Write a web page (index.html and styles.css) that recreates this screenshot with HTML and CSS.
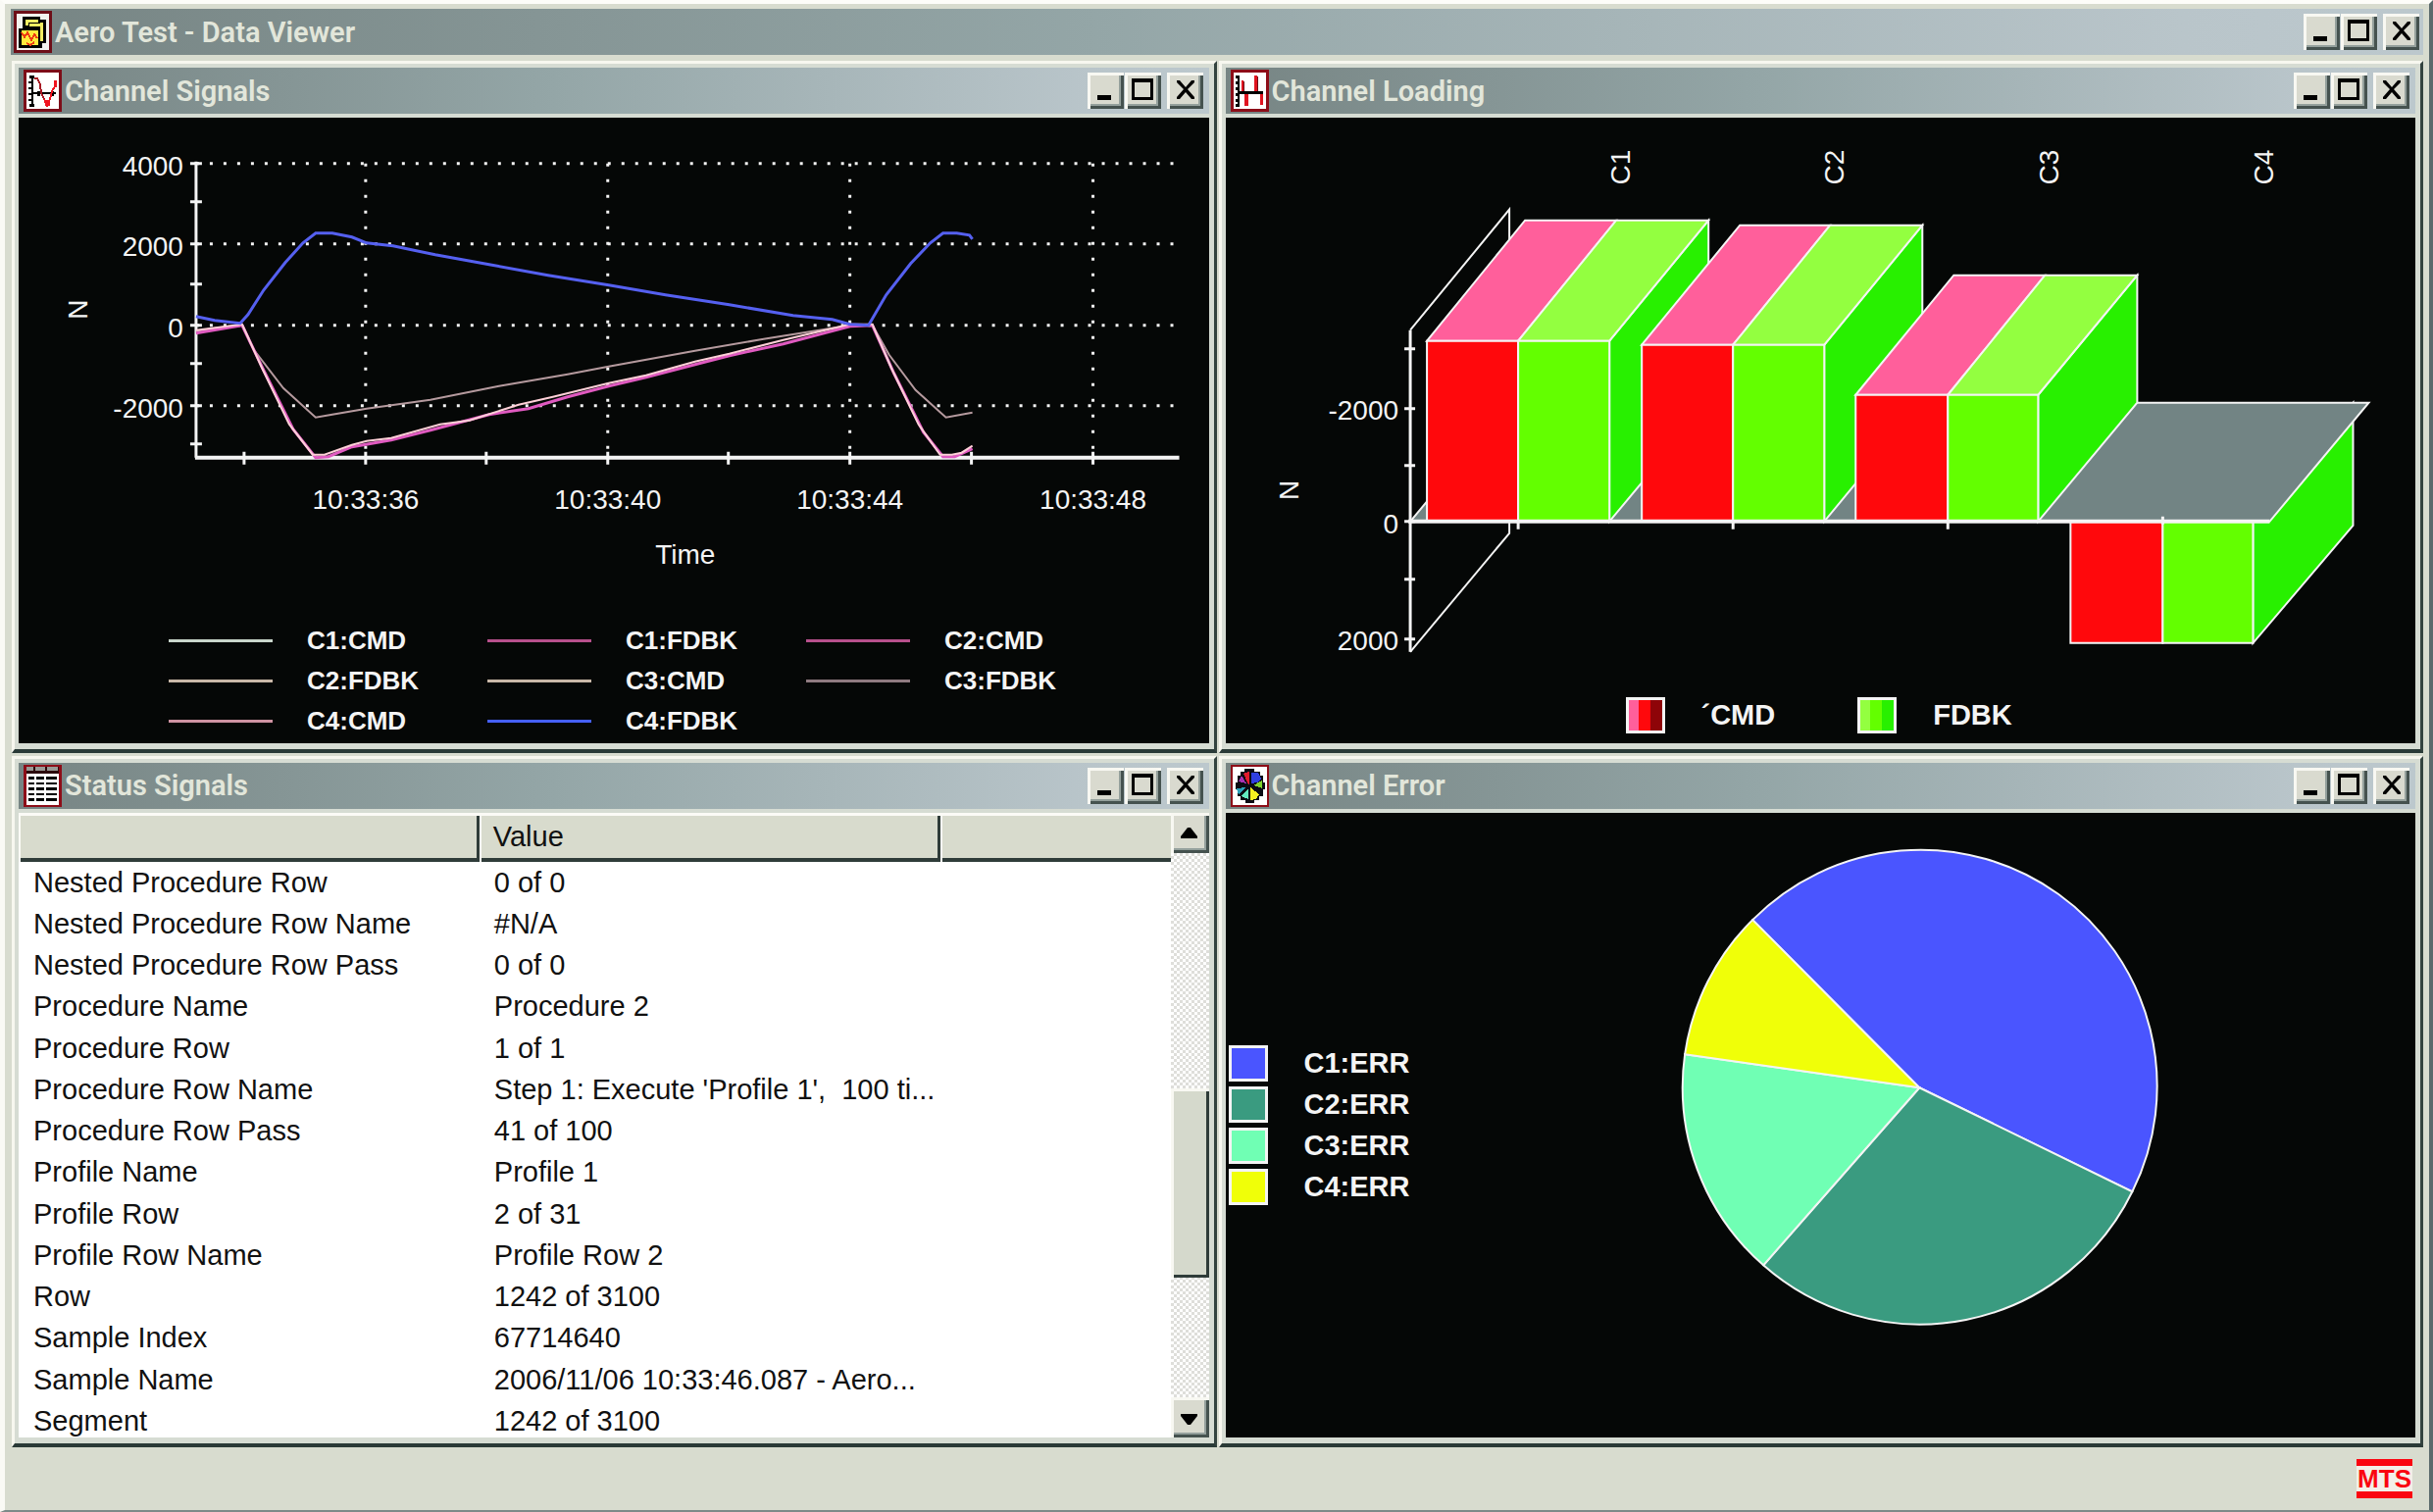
FILE: index.html
```html
<!DOCTYPE html>
<html lang="en">
<head>
    <meta charset="UTF-8">
    <meta name="viewport" content="width=device-width, initial-scale=1.0">
    <title>Aero Test - Data Viewer</title>
    <link rel="stylesheet" href="styles.css">
</head>
<body>
    <!-- shared window button glyphs -->
    <svg class="defs" aria-hidden="true">
        <symbol id="min" viewBox="0 0 37 37"><path d="M10 23h14v5h-14z"/></symbol>
        <symbol id="max" viewBox="0 0 37 37"><path fill-rule="evenodd" d="M7 6h22v22h-22zM10 10v15h16v-15z"/></symbol>
        <symbol id="close" viewBox="0 0 37 37"><path d="M10 8h3l6 7 6-7h3v2l-7 7 7 8v2h-3l-6-7-6 7h-3v-2l7-8-7-7z"/></symbol>
    </svg>

    <header class="titlebar main-title">
        <svg class="icon" viewBox="0 0 39 43" aria-hidden="true">
            <path fill="#6d0e17" d="M0 0h39v43h-39z"/>
            <path fill="#f3f3ee" d="M3 3h33v37h-33z"/>
            <path fill="#000" d="M9 6h18v3h6v24h-4v5h-24v-20h4z"/>
            <path fill="#f3ee62" d="M12 9h13v3h-13zM12 12h3v3h-3zM16 13h12v3h-12zM27 12h3v19h-3z"/>
            <path fill="#ffe93b" d="M8 20h17v15h-17z"/>
            <path fill="none" stroke="#ee3b12" stroke-width="2" d="M8 22l3 5 3-5 4 8 3-6 3 4M13 33l4 2 4-3"/>
        </svg>
        <h1>Aero Test - Data Viewer</h1>
        <div class="controls">
            <button aria-label="Minimize"><svg><use href="#min"/></svg></button>
            <button aria-label="Maximize"><svg><use href="#max"/></svg></button>
            <button class="close" aria-label="Close"><svg><use href="#close"/></svg></button>
        </div>
    </header>

    <main class="desktop">
        <!-- Channel Signals -->
        <section class="window">
            <div class="titlebar">
                <svg class="icon" viewBox="0 0 39 43" aria-hidden="true">
                    <path fill="#7d0d18" d="M0 0h39v43h-39z"/>
                    <path fill="#fff" d="M3 3h33v37h-33z"/>
                    <path fill="#000" d="M8 6h2v31h-2zM6 6h5v3h-5zM5 12h4v2h-4zM5 18h4v2h-4zM5 24h4v2h-4zM5 30h4v2h-4zM6 35h5v3h-5zM8 23h25v2h-25zM14 22h3v5h-3zM28 22h3v5h-3z"/>
                    <path fill="none" stroke="#a81a24" stroke-width="2" d="M11 9h3l3 6 1 9 4 8"/>
                    <path fill="none" stroke="#f01420" stroke-width="2" d="M21 30l3 7 3-7 2-8 3-5v-6"/>
                    <path fill="#f01420" d="M22 31h5v6h-5zM31 11h3v7h-3z"/>
                </svg>
                <h2>Channel Signals</h2>
                <div class="controls">
                    <button aria-label="Minimize"><svg><use href="#min"/></svg></button>
                    <button aria-label="Maximize"><svg><use href="#max"/></svg></button>
                    <button class="close" aria-label="Close"><svg><use href="#close"/></svg></button>
                </div>
            </div>
            <div class="content chart">
                <svg class="plot" viewBox="0 0 1214 511" role="img" aria-label="Channel signals in N over time">
                    <path class="dots-x" d="M181 46H1184M181 128H1184M181 211H1184M181 293H1184"/>
                    <path class="dots-y" d="M354 46V345M601 46V345M848 46V345M1096 46V345"/>
                    <path class="axis" d="M181 44V346M175 46h12M175 85h12M175 128h12M175 169h12M175 211h12M175 250h12M175 293h12M175 332h12"/>
                    <path class="axis" d="M230 340v13M354 340v13M477 340v13M601 340v13M724 340v13M848 340v13M972 340v13M1096 340v13"/>
                    <path class="baseline" d="M180 346H1184"/>
                    <path class="line c3" d="M181 217L200 214 228 210 240 236 270 275 303 305 320 302 355 296 420 287 490 273 560 261 602 253 690 237 760 225 848 211 871 211 888 241 915 277 946 305 973 300"/>
                    <path class="line magenta" d="M181 219L228 211 250 257 280 317 303 346 316 345 340 335 380 328 420 318 480 302 520 296 560 284 602 273 640 264 690 251 725 242 780 230 848 212 871 211 893 260 923 320 943 345 955 345 973 337"/>
                    <path class="line pink" d="M181 216L228 210 248 254 276 312 300 343 312 343 340 333 355 329 380 326 430 312 460 308 510 292 545 284 602 270 640 262 690 248 725 240 780 226 848 210 871 210 890 254 918 312 940 343 952 343 962 341 973 334"/>
                    <path class="line c4" d="M181 202L200 206 226 209 234 200 250 175 272 147 290 127 303 117H320L340 121 355 127 382 130 425 139 480 149 540 160 602 170 660 180 725 190 790 201 830 205 848 210 867 211 885 180 910 148 930 127 943 117H957L970 119 973 123"/>
                    <g class="label end">
                        <text x="168" y="58">4000</text>
                        <text x="168" y="140">2000</text>
                        <text x="168" y="223">0</text>
                        <text x="168" y="305">-2000</text>
                    </g>
                    <g class="label mid">
                        <text x="354" y="398">10:33:36</text>
                        <text x="601" y="398">10:33:40</text>
                        <text x="848" y="398">10:33:44</text>
                        <text x="1096" y="398">10:33:48</text>
                        <text x="680" y="454">Time</text>
                        <text transform="translate(70 195) rotate(-90)">N</text>
                    </g>
                </svg>
                <ul class="line-legend">
                    <li><i class="key k1"></i>C1:CMD</li>
                    <li><i class="key k2"></i>C1:FDBK</li>
                    <li><i class="key k2"></i>C2:CMD</li>
                    <li><i class="key k3"></i>C2:FDBK</li>
                    <li><i class="key k3"></i>C3:CMD</li>
                    <li><i class="key k4"></i>C3:FDBK</li>
                    <li><i class="key k5"></i>C4:CMD</li>
                    <li><i class="key k6"></i>C4:FDBK</li>
                </ul>
            </div>
        </section>

        <!-- Channel Loading -->
        <section class="window">
            <div class="titlebar">
                <svg class="icon" viewBox="0 0 39 43" aria-hidden="true">
                    <path fill="#8d0d18" d="M0 0h39v43h-39z"/>
                    <path fill="#fff" d="M3 3h33v37h-33z"/>
                    <path fill="#000" d="M7 6h2v31h-2zM5 6h4v3h-4zM5 12h4v3h-4zM5 18h4v3h-4zM5 24h4v3h-4zM5 30h4v3h-4zM5 35h4v3h-4zM9 22h24v3h-24z"/>
                    <path fill="#e01420" d="M11 11h2v11h-2zM14 25h4v12h-4zM24 6h3v16h-3zM30 25h3v11h-3z"/>
                    <path fill="#6d0e17" d="M13 12h1v10h-1zM27 7h1v15h-1z"/>
                </svg>
                <h2>Channel Loading</h2>
                <div class="controls">
                    <button aria-label="Minimize"><svg><use href="#min"/></svg></button>
                    <button aria-label="Maximize"><svg><use href="#max"/></svg></button>
                    <button class="close" aria-label="Close"><svg><use href="#close"/></svg></button>
                </div>
            </div>
            <div class="content chart">
                <svg class="plot" viewBox="0 0 1213 580" role="img" aria-label="Channel loading in N per channel">
                    <path class="edge" d="M188 216L289 93V290M188 544L289 423V411"/>
                    <!-- C4 hangs below the floor, so its side goes first -->
                    <path class="side edge" d="M1047 411V535L1149 415V290z"/>
                    <path class="floor edge" d="M188 411L289 290H1165L1064 411z"/>
                    <g class="edge">
                        <path class="side" d="M391 227L492 104V290L391 411z"/>
                        <path class="top-cmd" d="M205 227L305 104H398L298 227z"/>
                        <path class="top-fdbk" d="M298 227L398 104H492L391 227z"/>
                        <path class="cmd" d="M205 227h93v184h-93z"/>
                        <path class="fdbk" d="M298 227h93v184h-93z"/>
                    </g>
                    <g class="edge">
                        <path class="side" d="M610 231L710 109V290L610 411z"/>
                        <path class="top-cmd" d="M424 231L524 109H616L517 231z"/>
                        <path class="top-fdbk" d="M517 231L616 109H710L610 231z"/>
                        <path class="cmd" d="M424 231h93v180h-93z"/>
                        <path class="fdbk" d="M517 231h93v180h-93z"/>
                    </g>
                    <g class="edge">
                        <path class="side" d="M828 282L929 160V290L828 411z"/>
                        <path class="top-cmd" d="M642 282L742 160H835L736 282z"/>
                        <path class="top-fdbk" d="M736 282L835 160H929L828 282z"/>
                        <path class="cmd" d="M642 282h94v129h-94z"/>
                        <path class="fdbk" d="M736 282h92v129h-92z"/>
                    </g>
                    <g class="edge">
                        <path class="cmd" d="M861 411h94v124h-94z"/>
                        <path class="fdbk" d="M955 411h92v124h-92z"/>
                    </g>
                    <path class="axis" d="M188 216V544M182 235h11M182 296h11M182 354h11M182 411h11M182 470h11M182 531h11M298 411v8M517 411v8M736 411v8M955 406v8"/>
                    <path class="baseline" d="M186 411H1064"/>
                    <g class="label end">
                        <text x="176" y="307">-2000</text>
                        <text x="176" y="423">0</text>
                        <text x="176" y="542">2000</text>
                    </g>
                    <g class="label mid">
                        <text transform="translate(74 379) rotate(-90)">N</text>
                        <text transform="translate(412 50) rotate(-90)">C1</text>
                        <text transform="translate(630 50) rotate(-90)">C2</text>
                        <text transform="translate(849 50) rotate(-90)">C3</text>
                        <text transform="translate(1068 50) rotate(-90)">C4</text>
                    </g>
                </svg>
                <ul class="bar-legend">
                    <li><i class="swatch s-cmd"></i><span>´CMD</span></li>
                    <li><i class="swatch s-fdbk"></i><span>FDBK</span></li>
                </ul>
            </div>
        </section>

        <!-- Status Signals -->
        <section class="window">
            <div class="titlebar">
                <svg class="icon" viewBox="0 0 39 43" aria-hidden="true">
                    <path fill="#8d0d18" d="M0 0h39v43h-39z"/>
                    <path fill="#2b0a0c" d="M3 2h33v7h-33z"/>
                    <path fill="#9a9a96" d="M3 2h7v4h-7zM12 2h10v4h-10zM24 2h11v4h-11z"/>
                    <path fill="#fff" d="M3 9h33v32h-33z"/>
                    <path fill="#000" d="M5 12h6v3h-6zM13 12h8v3h-8zM23 12h11v3h-11zM5 18h6v2h-6zM13 18h8v2h-8zM23 18h11v2h-11zM5 23h6v3h-6zM13 23h8v3h-8zM23 23h11v3h-11zM5 29h6v2h-6zM13 29h8v2h-8zM23 29h11v2h-11zM5 34h6v3h-6zM13 34h8v3h-8zM23 34h11v3h-11z"/>
                </svg>
                <h2>Status Signals</h2>
                <div class="controls">
                    <button aria-label="Minimize"><svg><use href="#min"/></svg></button>
                    <button aria-label="Maximize"><svg><use href="#max"/></svg></button>
                    <button class="close" aria-label="Close"><svg><use href="#close"/></svg></button>
                </div>
            </div>
            <div class="content list-view">
                <div class="rows">
                    <table>
                        <thead>
                            <tr><th class="name"></th><th class="value">Value</th><th></th></tr>
                        </thead>
                        <tbody>
                            <tr><td>Nested Procedure Row</td><td colspan="2">0 of 0</td></tr>
                            <tr><td>Nested Procedure Row Name</td><td colspan="2">#N/A</td></tr>
                            <tr><td>Nested Procedure Row Pass</td><td colspan="2">0 of 0</td></tr>
                            <tr><td>Procedure Name</td><td colspan="2">Procedure 2</td></tr>
                            <tr><td>Procedure Row</td><td colspan="2">1 of 1</td></tr>
                            <tr><td>Procedure Row Name</td><td colspan="2">Step 1: Execute 'Profile 1',&nbsp; 100 ti...</td></tr>
                            <tr><td>Procedure Row Pass</td><td colspan="2">41 of 100</td></tr>
                            <tr><td>Profile Name</td><td colspan="2">Profile 1</td></tr>
                            <tr><td>Profile Row</td><td colspan="2">2 of 31</td></tr>
                            <tr><td>Profile Row Name</td><td colspan="2">Profile Row 2</td></tr>
                            <tr><td>Row</td><td colspan="2">1242 of 3100</td></tr>
                            <tr><td>Sample Index</td><td colspan="2">67714640</td></tr>
                            <tr><td>Sample Name</td><td colspan="2">2006/11/06 10:33:46.087 - Aero...</td></tr>
                            <tr><td>Segment</td><td colspan="2">1242 of 3100</td></tr>
                        </tbody>
                    </table>
                </div>
                <div class="scrollbar">
                    <button aria-label="Scroll up"><svg viewBox="0 0 37 37"><path d="M17 13h3l7 9v2h-17v-2z"/></svg></button>
                    <div class="track"><div class="thumb"></div></div>
                    <button aria-label="Scroll down"><svg viewBox="0 0 37 37"><path d="M10 15h17v2l-7 9h-3l-7-9z"/></svg></button>
                </div>
            </div>
        </section>

        <!-- Channel Error -->
        <section class="window">
            <div class="titlebar">
                <svg class="icon" viewBox="0 0 39 43" aria-hidden="true">
                    <path fill="#8d0d18" d="M0 0h39v43h-39z"/>
                    <path fill="#fff" d="M2 2h35v39h-35z"/>
                    <path fill="#0b0b14" d="M14 4h10v3h6v4h3v7h2v7h-2v7h-4v4h-5v3h-9v-3h-5v-4h-3v-7h-2v-7h2v-7h3v-4h4z"/>
                    <path fill="#e21b2c" d="M18 20L13 9l6-2v12z"/>
                    <path fill="#2f3fe0" d="M21 19V8h7l3 6-4 4z"/>
                    <path fill="#7fd32c" d="M23 21l9-5v8z"/>
                    <path fill="#f5ef20" d="M20 23l9 7-3 5-6 1z"/>
                    <path fill="#62e8c0" d="M18 24v11l-7-3z"/>
                    <path fill="#2aa0b8" d="M16 23l-8 7-2-6z"/>
                    <path fill="#a832b4" d="M16 19l-8-2 3-6z"/>
                </svg>
                <h2>Channel Error</h2>
                <div class="controls">
                    <button aria-label="Minimize"><svg><use href="#min"/></svg></button>
                    <button aria-label="Maximize"><svg><use href="#max"/></svg></button>
                    <button class="close" aria-label="Close"><svg><use href="#close"/></svg></button>
                </div>
            </div>
            <div class="content pie-chart">
                <ul class="pie-legend">
                    <li><i class="swatch e1"></i>C1:ERR</li>
                    <li><i class="swatch e2"></i>C2:ERR</li>
                    <li><i class="swatch e3"></i>C3:ERR</li>
                    <li><i class="swatch e4"></i>C4:ERR</li>
                </ul>
                <svg class="plot" viewBox="0 0 1013 635" role="img" aria-label="Channel error share">
                    <g class="edge">
                        <path fill="#4a55ff" d="M507 279L337 108A241 241 0 0 1 724 385z"/>
                        <path fill="#3a9b80" d="M507 279L724 385A241 241 0 0 1 348 460z"/>
                        <path fill="#70ffb4" d="M507 279L348 460A241 241 0 0 1 268 245z"/>
                        <path fill="#f0ff08" d="M507 279L268 245A241 241 0 0 1 337 108z"/>
                    </g>
                </svg>
            </div>
        </section>
    </main>

    <footer class="statusbar">
        <span class="logo">MTS</span>
    </footer>
</body>
</html>
```
FILE: styles.css
```css
* {
    box-sizing: border-box;
}
body {
    margin: 0;
    height: 100vh;
    display: flex;
    flex-direction: column;
    padding: 5px 6px 0 6px;
    border-top: 4px solid #fdfdf9;
    border-right: 4px solid #5b6a6c;
    border-bottom: 2px solid #7c8a88;
    border-left: 5px solid #fafaf5;
    background: #d8dccf;
    font-family: "Liberation Sans", Arial, sans-serif;
    font-size: 29px;
    color: #111;
}
h1, h2, ul {
    margin: 0;
    padding: 0;
}
ul {
    list-style: none;
}
.defs {
    display: none;
}

/* title bars */
.titlebar {
    flex: none;
    display: flex;
    align-items: center;
    gap: 3px;
    height: 47px;
    padding: 0 6px 0 5px;
    background: linear-gradient(to right, #778584, #94a6a7 45%, #b9c5ca 90%, #bcc8cd);
}
.main-title {
    padding: 0 4px 0 3px;
}
.titlebar h1, .titlebar h2 {
    flex: 1;
    font-family: Roboto, sans-serif;
    font-size: 29px;
    font-weight: 600;
    line-height: 40px;
    color: #e2e6da;
}
.icon {
    flex: none;
    width: 39px;
    height: 43px;
    shape-rendering: crispEdges;
}
.controls {
    display: flex;
    gap: 1px;
}
button {
    display: block;
    width: 37px;
    height: 37px;
    padding: 0;
    border: 0;
    background: #d9dacf;
    box-shadow: inset 3px 3px #f8f8f2, inset -3px -3px #45524f, inset -5px -5px #94a09c;
}
button svg {
    display: block;
    width: 37px;
    height: 37px;
}
.close {
    margin-left: 5px;
}

/* child windows */
.desktop {
    flex: 1;
    min-height: 0;
    display: grid;
    grid-template-columns: minmax(0, 1fr) minmax(0, 1fr);
    grid-template-rows: minmax(0, 1fr) minmax(0, 1fr);
    gap: 3px 2px;
    padding: 6px 0 0 1px;
}
.window {
    display: flex;
    flex-direction: column;
    gap: 4px;
    min-height: 0;
    padding: 4px 5px 6px 4px;
    border: 3px solid;
    border-bottom-width: 4px;
    border-color: #f7f7ef #33433f #2a3a37 #f7f7ef;
    background: #d6dcd3;
}
.content {
    flex: 1;
    min-height: 0;
    background: #050706;
    color: #f4f4f4;
}

/* charts */
.chart {
    display: flex;
    flex-direction: column;
}
.plot {
    flex: 1;
    display: block;
    min-width: 0;
    min-height: 0;
}
.label {
    fill: #f4f4f4;
    font-size: 28px;
}
.end {
    text-anchor: end;
}
.mid {
    text-anchor: middle;
}
.axis, .baseline, .edge, .line, .dots-x, .dots-y {
    fill: none;
    stroke: #f4f4f4;
    stroke-width: 2;
}
.axis {
    stroke-width: 3;
}
.baseline {
    stroke-width: 4;
}
.dots-x {
    stroke-dasharray: 3 11;
    stroke-width: 3;
}
.dots-y {
    stroke-dasharray: 3 13;
    stroke-width: 3;
}
.line.c3 {
    stroke: #b59a9e;
}
.line.magenta {
    stroke: #e05ac0;
    stroke-width: 3;
}
.line.pink {
    stroke: #ffd0d8;
}
.line.c4 {
    stroke: #5560f0;
    stroke-width: 3;
}
.floor {
    fill: #728484;
}
.side {
    fill: #28f000;
}
.cmd {
    fill: #ff080c;
}
.fdbk {
    fill: #63ff00;
}
.top-cmd {
    fill: #ff5f9b;
}
.top-fdbk {
    fill: #93ff40;
}

/* legends */
.line-legend {
    display: grid;
    grid-template-columns: repeat(3, 325px);
    grid-auto-rows: 41px;
    padding: 0 0 2px 153px;
    font-size: 26px;
    font-weight: bold;
}
.line-legend li {
    display: flex;
    align-items: center;
    gap: 35px;
}
.key {
    width: 106px;
    height: 3px;
    background: #c9d6cb;
}
.k2 {
    background: #b8508c;
}
.k3 {
    background: #c9b8a8;
}
.k4 {
    background: #8f7a80;
}
.k5 {
    background: #cf93a2;
}
.k6 {
    background: #4560ff;
}
.bar-legend {
    display: flex;
    gap: 84px;
    height: 56px;
    padding-left: 408px;
    font-weight: bold;
}
.bar-legend li {
    display: flex;
    align-items: center;
    gap: 37px;
}
.swatch {
    width: 40px;
    height: 37px;
    border: 3px solid #f4f4f4;
}
.s-cmd {
    background: linear-gradient(to right, #ff5f9b 30%, #ff080c 30% 66%, #8e0408 66%);
}
.s-fdbk {
    background: linear-gradient(to right, #93ff40 30%, #63ff00 30% 66%, #28f000 66%);
}
.pie-chart {
    display: flex;
}
.pie-legend {
    flex: none;
    display: flex;
    flex-direction: column;
    justify-content: center;
    gap: 5px;
    width: 200px;
    padding-left: 3px;
    font-weight: bold;
}
.pie-legend li {
    display: flex;
    align-items: center;
    gap: 37px;
}
.e1 {
    background: #4a55ff;
}
.e2 {
    background: #3a9b80;
}
.e3 {
    background: #70ffb4;
}
.e4 {
    background: #f0ff08;
}

/* status list */
.list-view {
    display: flex;
    background: #fff;
    color: #111;
}
.rows {
    flex: 1;
    overflow: hidden;
}
table {
    width: 100%;
    table-layout: fixed;
    border-collapse: collapse;
}
th {
    height: 50px;
    padding: 0 14px;
    background: #d8dbcd;
    box-shadow: inset 2px 3px #fbfbf6, inset -3px -4px #2f3c39;
    font-weight: normal;
    text-align: left;
}
th:last-child {
    box-shadow: inset 2px 3px #fbfbf6, inset 0 -4px #2f3c39;
}
.name, .value {
    width: 40%;
}
tr {
    height: 42px;
}
tbody tr:nth-child(4n) {
    height: 43px;
}
td {
    padding: 0 15px;
    line-height: 36px;
    white-space: nowrap;
}
.scrollbar {
    flex: none;
    display: flex;
    flex-direction: column;
    width: 39px;
}
.scrollbar button {
    flex: none;
    width: 39px;
    height: 41px;
}
.track {
    flex: 1;
    display: flex;
    flex-direction: column;
    padding-top: 240px;
    background: repeating-conic-gradient(#dededa 0 25%, #fff 0 50%) 0 0 / 6px 6px;
}
.thumb {
    height: 193px;
    background: #d5d9cc;
    box-shadow: inset 3px 3px #f8f8f2, inset -3px -3px #2f3c39;
}

/* bottom strip */
.statusbar {
    flex: none;
    display: flex;
    justify-content: flex-end;
    align-items: center;
    height: 64px;
    padding-right: 11px;
}
.logo {
    padding: 0 1px;
    border-top: 7px solid #fa0510;
    border-bottom: 7px solid #fa0510;
    background: #f3efe8;
    color: #fa0510;
    font-size: 26px;
    font-weight: bold;
    line-height: 26px;
}
```
